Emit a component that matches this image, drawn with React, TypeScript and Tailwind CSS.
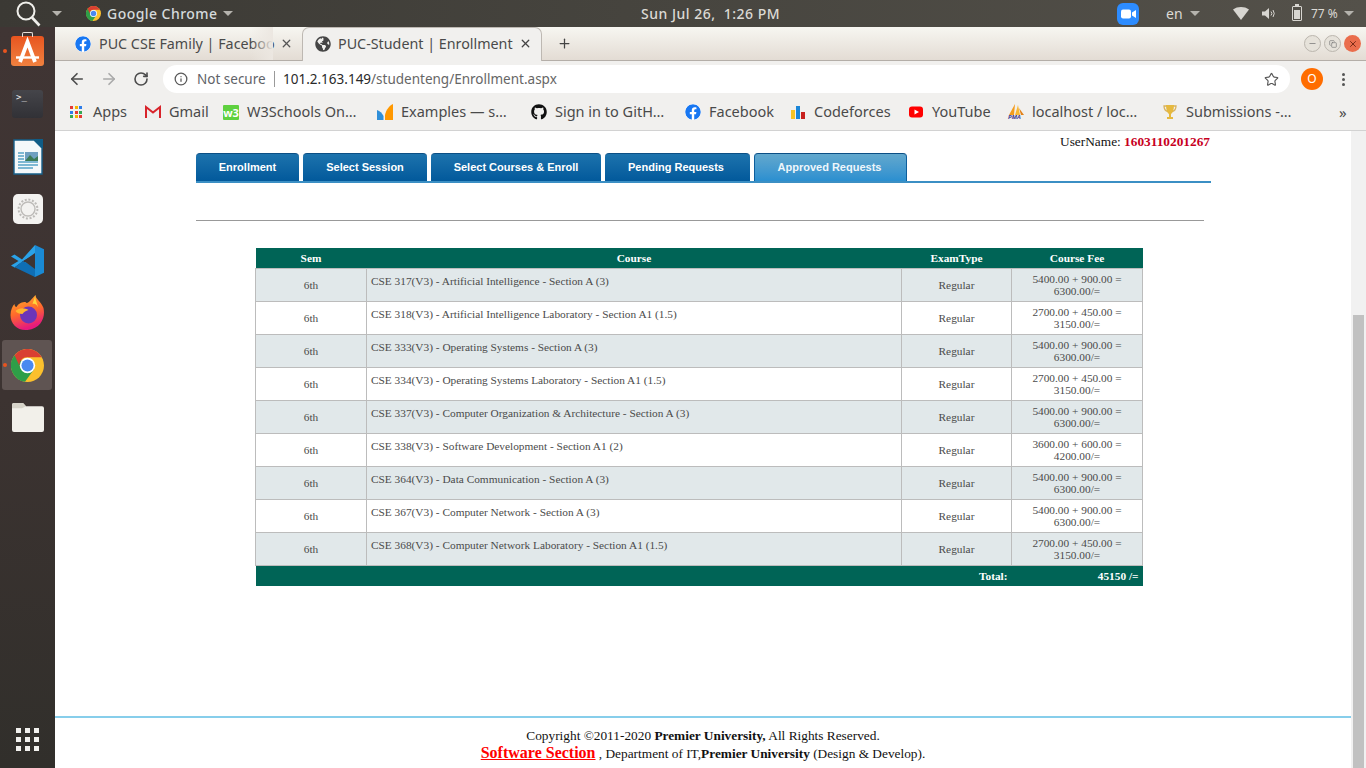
import type { ReactNode } from "react";
import { ArrowLeft, ArrowRight, RotateCw, Info, Star, X, Plus, Minus, Copy } from "lucide-react";
import { FaGithub, FaFacebook, FaGlobeAmericas } from "react-icons/fa";

const uiFont = "font-['Noto_Sans',sans-serif]";

function ChromeLogo({ size }: { size: number }) {
  return (
    <svg width={size} height={size} viewBox="0 0 24 24">
      <circle cx="12" cy="12" r="12" fill="#fbc02d" />
      <path d="M2.6 4.5A12 12 0 0 0 10.2 23.9L16.76 14.75L12 12Z" fill="#2e9e48" />
      <path d="M22.4 6H12A5.5 5.5 0 0 0 7.24 14.75L2.6 4.5A12 12 0 0 1 22.4 6Z" fill="#d93f32" />
      <circle cx="12" cy="12" r="5.6" fill="#fff" />
      <circle cx="12" cy="12" r="4.4" fill="#4a89f0" />
    </svg>
  );
}

function Caret({ className = "" }: { className?: string }) {
  return <span className={`block h-0 w-0 border-x-[5px] border-t-[5px] border-x-transparent border-t-[#b5b3ad] ${className}`} />;
}

function TopBar() {
  return (
    <div className={`flex h-[27px] shrink-0 items-center bg-linear-to-r from-[#3b3934] via-[#47453f] to-[#54514a] text-[14px] text-[#dcdad5] ${uiFont}`}>
      <div className="flex w-[641px] items-center">
        <svg className="ml-[15px]" width="26" height="26" viewBox="0 0 26 26" fill="none" stroke="#f0efeb" strokeWidth="2">
          <circle cx="11" cy="10" r="8.5" />
          <path d="M17 16.5l7.5 8" strokeWidth="2.6" />
        </svg>
        <Caret className="ml-[11px]" />
        <span className="ml-[24px]">
          <ChromeLogo size={15} />
        </span>
        <span className="ml-[6px] font-medium tracking-[0.45px] text-[#d5dadc]">Google Chrome</span>
        <Caret className="ml-[6px]" />
      </div>
      <span className="w-[139px] text-center font-medium tracking-[0.5px] whitespace-pre">Sun Jul 26,  1:26 PM</span>
      <div className="ml-[337px] flex items-center">
        <span className="flex h-[22px] w-[22px] items-center justify-center rounded-[6px] bg-[#2d8cff]">
          <svg width="15" height="10" viewBox="0 0 15 10" fill="#fff">
            <rect x="0" y="0.5" width="10" height="9" rx="2" />
            <path d="M11 3.5L15 1V9L11 6.5Z" />
          </svg>
        </span>
        <span className="ml-[27px] w-[16px]">en</span>
        <Caret className="ml-[8px]" />
        <svg className="ml-[33px]" width="16" height="13" viewBox="0 0 16 13">
          <path d="M0 2.5C4.5-.8 11.5-.8 16 2.5L8 13Z" fill="#d8d6d1" />
        </svg>
        <svg className="ml-[13px]" width="15" height="13" viewBox="0 0 15 13" fill="none" stroke="#d8d6d1">
          <path d="M0 4.5H3L7 1V12L3 8.5H0Z" fill="#d8d6d1" stroke="none" />
          <path d="M9 4.5a3 3 0 0 1 0 4" />
          <path d="M11 3a6 6 0 0 1 0 7" />
        </svg>
        <span className="relative ml-[15px] h-[15px] w-[10px] rounded-[1px] border border-[#d8d6d1]">
          <span className="absolute inset-x-[1px] bottom-[1px] h-[9px] bg-[#d8d6d1]" />
          <span className="absolute -top-[3px] left-[2px] h-[2px] w-[4px] bg-[#d8d6d1]" />
        </span>
        <span className="ml-[9px] w-[28px] text-[12px] whitespace-nowrap">77 %</span>
        <Caret className="ml-[5px]" />
      </div>
    </div>
  );
}

function SoftwareIcon() {
  return (
    <div className="relative h-[30px] w-[33px] rounded-[3px] bg-linear-to-b from-[#e8541f] to-[#f0813f]">
      <span className="absolute -top-[4px] left-[11px] h-[5px] w-[11px] rounded-t-[2px] border border-b-0 border-[#e8e0da]" />
      <svg className="absolute inset-0" width="33" height="30" viewBox="0 0 33 30" fill="none" stroke="#fff" strokeWidth="3.8">
        <path d="M9 26L16.5 6L24 26" />
        <path d="M5 21.5H28" strokeWidth="2.4" />
      </svg>
    </div>
  );
}

function TerminalIcon() {
  return (
    <div className="flex h-[28px] w-[31px] rounded-[3px] bg-linear-to-b from-[#45454a] to-[#313136] pt-[1px] pl-[4px] font-['DejaVu_Sans_Mono',monospace] text-[9px] leading-[12px] text-[#eee]">
      &gt;_
    </div>
  );
}

function WriterIcon() {
  return (
    <svg width="30" height="36" viewBox="0 0 30 36">
      <path d="M1 1H21L29 9V35H1Z" fill="#f4f8fa" stroke="#17608a" strokeWidth="1.4" />
      <path d="M20 0H30V10Z" fill="#0f5c86" />
      <rect x="12" y="13" width="13" height="9" fill="#6f9fc0" />
      <path d="M12 22L17 16L21 20L25 17V22Z" fill="#3c7a55" />
      <path d="M5 14H11M5 17H11M5 20H11M5 23H25M5 26H25M5 29H20" stroke="#57a3c6" strokeWidth="1.3" />
    </svg>
  );
}

function SettingsIcon() {
  return (
    <div className="flex h-[30px] w-[30px] items-center justify-center rounded-[5px] bg-[#f3f2f0]">
      <svg width="24" height="24" viewBox="0 0 24 24" fill="none" stroke="#bdbbb8">
        <circle cx="12" cy="12" r="7" strokeWidth="1.4" />
        <circle cx="12" cy="12" r="9.4" strokeWidth="2" strokeDasharray="2 1.7" />
      </svg>
    </div>
  );
}

function VsCodeIcon() {
  return (
    <svg width="33" height="32" viewBox="0 0 33 32">
      <path d="M24 0L33 4.2V27.8L24 32L8 17.5L24 16Z" fill="#1a8ad4" />
      <path d="M24 0V9L12 16L3.5 22.5L0 20.5L7.5 16L0 11.5L3.5 9.5L11 14.5Z" fill="#2aa2e8" />
      <path d="M24 32V23L12 16L3.5 22.5L0 20.5L24 32Z" fill="#0f6eb4" />
      <path d="M24 8V24L13 16Z" fill="#3e3433" />
    </svg>
  );
}

function FirefoxIcon() {
  return (
    <svg width="35" height="36" viewBox="0 0 34 36">
      <defs>
        <linearGradient id="ffBody" x1="0" y1="0" x2="0.3" y2="1">
          <stop offset="0" stopColor="#ffb32e" />
          <stop offset="0.55" stopColor="#ff6a2b" />
          <stop offset="1" stopColor="#e6197e" />
        </linearGradient>
      </defs>
      <path d="M25 0C25 4 31 7 33 13C35 22 31 33 17 35C7 36 0 29 0 20C0 15 2 11 4 9C4 11 5 12 6 12C8 8 12 7 15 7C17 10 20 5 25 0Z" fill="url(#ffBody)" />
      <circle cx="18" cy="20" r="8.5" fill="#6c35b8" />
      <path d="M5 16C9 12 15 13 18 15C14 16 13 18 12 19C9 19 6 18 5 16Z" fill="#ffb52e" />
      <path d="M25 0C24 5 28 10 28 15C28 11 25 8 22 9C23 6 24 3 25 0Z" fill="#ffd53d" />
    </svg>
  );
}

function FolderIcon() {
  return (
    <svg width="34" height="31" viewBox="0 0 34 30" preserveAspectRatio="none">
      <path d="M1 3a2 2 0 0 1 2-2H12L15 4H31a2 2 0 0 1 2 2V27a2 2 0 0 1-2 2H3a2 2 0 0 1-2-2Z" fill="#f2f0ea" />
      <path d="M1 3a2 2 0 0 1 2-2H12L15 4L11 6H1Z" fill="#d6d3c9" />
    </svg>
  );
}

function Launcher() {
  const dot = "absolute left-[3px] top-1/2 h-[4px] w-[4px] -translate-y-1/2 rounded-full bg-[#e9541f]";
  return (
    <div className="flex w-[55px] shrink-0 flex-col bg-linear-to-b from-[#403534] via-[#3c3331] to-[#312f2b]">
      <div className="relative z-10 -mt-[2px] mb-px flex h-[52px] items-center justify-center">
        <span className={dot} />
        <SoftwareIcon />
      </div>
      <div className="mb-px flex h-[52px] items-center justify-center"><TerminalIcon /></div>
      <div className="flex h-[52px] items-center justify-center"><WriterIcon /></div>
      <div className="flex h-[52px] items-center justify-center"><SettingsIcon /></div>
      <div className="flex h-[52px] items-center justify-center"><VsCodeIcon /></div>
      <div className="flex h-[52px] items-center justify-center"><FirefoxIcon /></div>
      <div className="relative flex h-[52px] items-center justify-center">
        <span className="absolute inset-y-px left-[2px] w-[50px] rounded-[3px] bg-[#5f5452]" />
        <span className={dot} />
        <span className="relative"><ChromeLogo size={33} /></span>
      </div>
      <div className="flex h-[52px] items-center justify-center"><FolderIcon /></div>
      <div className="mt-auto mb-[17px] grid grid-cols-3 gap-x-[4px] gap-y-[4px] self-center">
        {Array.from({ length: 9 }).map((_, i) => (
          <span key={i} className="h-[5px] w-[5px] bg-[#f2f1ee]" />
        ))}
      </div>
    </div>
  );
}

function Tabs() {
  return (
    <div className={`flex h-[34px] shrink-0 border-b border-[#b4aea8] bg-linear-to-b from-[#f7f6f1] to-[#e3dcd4] text-[14.3px] text-[#4a4a4a] ${uiFont}`}>
      <div className="relative ml-[10px] flex w-[237px] items-center">
        <FaFacebook className="ml-[10px] shrink-0 rounded-full bg-white" size={16} color="#1877f2" />
        <span className="ml-[8px] w-[176px] overflow-hidden whitespace-nowrap">PUC CSE Family | Facebook</span>
        <span className="absolute top-0 left-[186px] h-full w-[22px] bg-linear-to-r from-transparent to-[#ece7e1]" />
        <X className="ml-[5px] shrink-0 text-[#555]" size={13} strokeWidth={2.4} />
      </div>
      <div className="-mb-px flex w-[240px] items-center rounded-t-[7px] border border-b-0 border-[#bdb8b2] bg-[#f1f0ee] pb-[2px]">
        <FaGlobeAmericas className="ml-[12px] shrink-0 text-[#454545]" size={16} />
        <span className="ml-[7px] w-[180px] overflow-hidden whitespace-nowrap">PUC-Student | Enrollment</span>
        <X className="ml-[1px] shrink-0 text-[#444]" size={13} strokeWidth={2.4} />
      </div>
      <Plus className="mt-[9px] ml-[15px] text-[#444]" size={15} strokeWidth={2} />
      <div className="mt-[8px] mr-[5px] ml-auto flex items-center gap-[3px] self-start">
        <span className="flex h-[17px] w-[17px] items-center justify-center rounded-full border border-[#bbb6ae] bg-[#e6e2da]">
          <Minus size={9} className="text-[#777]" />
        </span>
        <span className="flex h-[17px] w-[17px] items-center justify-center rounded-full border border-[#bbb6ae] bg-[#e6e2da]">
          <Copy size={8} className="text-[#777]" />
        </span>
        <span className="flex h-[17px] w-[17px] items-center justify-center rounded-full bg-[#ea6d4c]">
          <X size={10} className="text-[#7a2c18]" strokeWidth={2.4} />
        </span>
      </div>
    </div>
  );
}

function Toolbar() {
  return (
    <div className={`flex h-[36px] shrink-0 items-center bg-[#f1f0ee] ${uiFont}`}>
      <ArrowLeft className="ml-[13px] text-[#4c4c4c]" size={18} strokeWidth={2.2} />
      <ArrowRight className="ml-[14px] text-[#a9a9a9]" size={18} strokeWidth={2.2} />
      <RotateCw className="ml-[15px] text-[#4c4c4c]" size={16} strokeWidth={2.4} />
      <div className="ml-[14px] flex h-[28px] w-[1127px] items-center rounded-full bg-white text-[13.5px]">
        <Info className="ml-[11px] text-[#5a5a5a]" size={14} strokeWidth={2.2} />
        <span className="ml-[9px] w-[69px] whitespace-nowrap text-[#5f6368]">Not secure</span>
        <span className="ml-[8px] h-[16px] w-px bg-[#9a9a9a]" />
        <span className="ml-[8px] text-[#2a2a2a]">101.2.163.149</span>
        <span className="text-[#666]">/studenteng/Enrollment.aspx</span>
        <Star className="mr-[11px] ml-auto text-[#555]" size={15} strokeWidth={1.8} />
      </div>
      <span className="ml-[11px] flex h-[22px] w-[22px] items-center justify-center rounded-full bg-[#ff6d00] text-[12px] text-white">O</span>
      <span className="ml-[19px] flex flex-col gap-[2px]">
        <span className="h-[3px] w-[3px] rounded-full bg-[#555]" />
        <span className="h-[3px] w-[3px] rounded-full bg-[#555]" />
        <span className="h-[3px] w-[3px] rounded-full bg-[#555]" />
      </span>
    </div>
  );
}

const appsColors = ["#e53935", "#f4b400", "#2e7de9", "#2e7de9", "#e53935", "#34a853", "#34a853", "#f4b400", "#e53935"];

const bookmarks: { label: string; width: string; icon: ReactNode }[] = [
  {
    label: "Apps",
    width: "w-[75px]",
    icon: (
      <span className="mr-auto grid w-[12px] grid-cols-3 gap-[1.5px]">
        {appsColors.map((c, i) => (
          <span key={i} className="h-[3px] w-[3px]" style={{ backgroundColor: c }} />
        ))}
      </span>
    ),
  },
  {
    label: "Gmail",
    width: "w-[78px]",
    icon: (
      <svg width="16" height="16" viewBox="0 0 16 16">
        <rect x="1" y="3" width="14" height="11" fill="#eeeeee" />
        <path d="M1 14V3L8 8.5L15 3V14" fill="none" stroke="#d8232a" strokeWidth="2" />
      </svg>
    ),
  },
  {
    label: "W3Schools On…",
    width: "w-[154px]",
    icon: (
      <span className="flex h-[15px] w-[16px] items-center justify-center rounded-[1px] bg-[#5fd13f] text-[11px] leading-none font-bold text-white">w3</span>
    ),
  },
  {
    label: "Examples — s…",
    width: "w-[154px]",
    icon: (
      <svg width="16" height="16" viewBox="0 0 16 16">
        <path d="M0 6C3 7 5 9 6.5 12V16H0Z" fill="#2f8fd8" />
        <path d="M16 0V16H8V11C9 6 12 2 16 0Z" fill="#ff9800" />
      </svg>
    ),
  },
  { label: "Sign in to GitH…", width: "w-[154px]", icon: <FaGithub size={16} color="#111" /> },
  {
    label: "Facebook",
    width: "w-[105px]",
    icon: <FaFacebook className="rounded-full bg-white" size={16} color="#1877f2" />,
  },
  {
    label: "Codeforces",
    width: "w-[118px]",
    icon: (
      <svg width="16" height="16" viewBox="0 0 16 16">
        <rect x="1" y="6" width="4" height="9" fill="#f7c325" />
        <rect x="6" y="2" width="4" height="13" fill="#1b86d8" />
        <rect x="11" y="8" width="4" height="7" fill="#c8201d" />
      </svg>
    ),
  },
  {
    label: "YouTube",
    width: "w-[100px]",
    icon: (
      <svg width="16" height="16" viewBox="0 0 16 16">
        <rect x="1" y="2.5" width="14" height="11" rx="3" fill="#f00" />
        <path d="M6.5 5.5L11 8L6.5 10.5Z" fill="#fff" />
      </svg>
    ),
  },
  {
    label: "localhost / loc…",
    width: "w-[154px]",
    icon: (
      <span className="relative block h-[16px] w-[16px]">
        <svg width="16" height="11" viewBox="0 0 16 11">
          <path d="M1 11L7 0L6 11Z" fill="#f29b1d" />
          <path d="M7 11L10 1L12 11Z" fill="#f7b733" />
          <path d="M13 11L11 4L16 11Z" fill="#e2821a" />
        </svg>
        <span className="absolute top-[10px] left-0 text-[6px] leading-[6px] font-bold text-[#3c3a8f] italic">PMA</span>
      </span>
    ),
  },
  {
    label: "Submissions -…",
    width: "w-[179px]",
    icon: (
      <svg width="16" height="16" viewBox="0 0 16 16">
        <path d="M2 2H14C14 5 12.5 7 10 7.5H6C3.5 7 2 5 2 2Z" fill="none" stroke="#d8b25c" strokeWidth="1.3" />
        <path d="M4 1H12C12 6 10.5 9 9 10V13H11V15H5V13H7V10C5.5 9 4 6 4 1Z" fill="#e6b93f" />
      </svg>
    ),
  },
];

function BookmarksBar() {
  return (
    <div className={`flex h-[33px] shrink-0 items-center bg-[#f1f0ee] pb-[3px] pl-[15px] text-[14.5px] text-[#4a4a4a] ${uiFont}`}>
      {bookmarks.map((b) => (
        <div key={b.label} className={`flex items-center ${b.width}`}>
          <span className="flex w-[16px] shrink-0 items-center justify-center">{b.icon}</span>
          <span className={`whitespace-nowrap ${b.label === "Apps" ? "ml-[7px]" : "ml-[8px]"}`}>{b.label}</span>
        </div>
      ))}
      <span className="-ml-[2px] text-[15px]">»</span>
    </div>
  );
}

const tabItems = [
  { label: "Enrollment", width: "w-[103px]", active: false },
  { label: "Select Session", width: "w-[124px]", active: false },
  { label: "Select Courses & Enroll", width: "w-[170px]", active: false },
  { label: "Pending Requests", width: "w-[145px] pr-[3px]", active: false },
  { label: "Approved Requests", width: "w-[153px] pr-[2px]", active: true },
];

const courses = [
  { name: "CSE 317(V3) - Artificial Intelligence - Section A (3)", fee: "5400.00 + 900.00 =", total: "6300.00/=" },
  { name: "CSE 318(V3) - Artificial Intelligence Laboratory - Section A1 (1.5)", fee: "2700.00 + 450.00 =", total: "3150.00/=" },
  { name: "CSE 333(V3) - Operating Systems - Section A (3)", fee: "5400.00 + 900.00 =", total: "6300.00/=" },
  { name: "CSE 334(V3) - Operating Systems Laboratory - Section A1 (1.5)", fee: "2700.00 + 450.00 =", total: "3150.00/=" },
  { name: "CSE 337(V3) - Computer Organization & Architecture - Section A (3)", fee: "5400.00 + 900.00 =", total: "6300.00/=" },
  { name: "CSE 338(V3) - Software Development - Section A1 (2)", fee: "3600.00 + 600.00 =", total: "4200.00/=" },
  { name: "CSE 364(V3) - Data Communication - Section A (3)", fee: "5400.00 + 900.00 =", total: "6300.00/=" },
  { name: "CSE 367(V3) - Computer Network - Section A (3)", fee: "5400.00 + 900.00 =", total: "6300.00/=" },
  { name: "CSE 368(V3) - Computer Network Laboratory - Section A1 (1.5)", fee: "2700.00 + 450.00 =", total: "3150.00/=" },
];

function EnrollmentTable() {
  return (
    <table className="ml-[200px] w-[887px] table-fixed border-collapse text-[11.33px] leading-[12px] text-[#4b4b4b]">
      <thead>
        <tr className="h-[20px] bg-[#006456] font-bold text-white">
          <th className="w-[111px]">Sem</th>
          <th className="w-[535px]">Course</th>
          <th className="w-[110px]">ExamType</th>
          <th className="w-[131px]">Course Fee</th>
        </tr>
      </thead>
      <tbody>
        {courses.map((c, i) => (
          <tr key={c.name} className={`h-[33px] ${i % 2 === 0 ? "bg-[#e1e8ea]" : "bg-white"}`}>
            <td className="border border-[#bcbcbc] text-center">6th</td>
            <td className="border border-[#bcbcbc] pt-[6px] pl-[4px] align-top">{c.name}</td>
            <td className="border border-[#bcbcbc] text-center">Regular</td>
            <td className="border border-[#bcbcbc] text-center">
              {c.fee}
              <br />
              {c.total}
            </td>
          </tr>
        ))}
      </tbody>
      <tfoot>
        <tr className="h-[21px] bg-[#006456] font-bold text-white">
          <td colSpan={3} className="pr-[4px] text-right">Total:</td>
          <td className="pr-[4px] text-right">45150 /=</td>
        </tr>
      </tfoot>
    </table>
  );
}

function Page() {
  return (
    <div className="flex min-h-0 flex-1 border-t border-[#d2d2d2] bg-white font-['Liberation_Serif',serif]">
      <div className="flex flex-1 flex-col">
        <div className="ml-[141px] w-[1015px]">
          <div className="flex h-[22px] items-center justify-end pr-[1px] text-[13.33px] text-[#111]">
            UserName:&nbsp;<b className="text-[#c8001e]">1603110201267</b>
          </div>
          <div className="flex gap-[4px] border-b-2 border-[#3b8fc4] font-['Liberation_Sans',sans-serif] text-[11px] font-bold text-white">
            {tabItems.map((t) => (
              <div
                key={t.label}
                className={`flex h-[28px] items-center justify-center rounded-t-[4px] border-t border-[#0b4f85] ${t.width} ${
                  t.active
                    ? "border-x border-x-[#0d5e9c] bg-linear-to-b from-[#62a8cd] to-[#2a8fd0] text-[#eef6fb]"
                    : "bg-linear-to-b from-[#1c73ad] to-[#02599b]"
                }`}
              >
                {t.label}
              </div>
            ))}
          </div>
        </div>
        <div className="mt-[37px] mb-[27px] ml-[141px] h-px w-[1008px] bg-[#999]" />
        <EnrollmentTable />
        <div className="mt-auto h-[52px] border-t-2 border-[#87ceeb] pt-[9px] text-center text-[13.33px] leading-[18px] text-[#111]">
          <div>
            Copyright ©2011-2020 <b>Premier University,</b> All Rights Reserved.
          </div>
          <div className="-mt-px">
            <b className="text-[16px] text-[#f00] underline">Software Section</b> , Department of IT,<b>Premier University</b> (Design &amp; Develop).
          </div>
        </div>
      </div>
      <div className="flex w-[15px] flex-col justify-end bg-[#f1f1f1]">
        <div className="mx-[2px] h-[453px] bg-[#c1c1c1]" />
      </div>
    </div>
  );
}

export default function App() {
  return (
    <div className="flex h-screen w-full flex-col overflow-hidden">
      <TopBar />
      <div className="flex min-h-0 flex-1">
        <Launcher />
        <div className="flex min-w-0 flex-1 flex-col">
          <Tabs />
          <Toolbar />
          <BookmarksBar />
          <Page />
        </div>
      </div>
    </div>
  );
}
